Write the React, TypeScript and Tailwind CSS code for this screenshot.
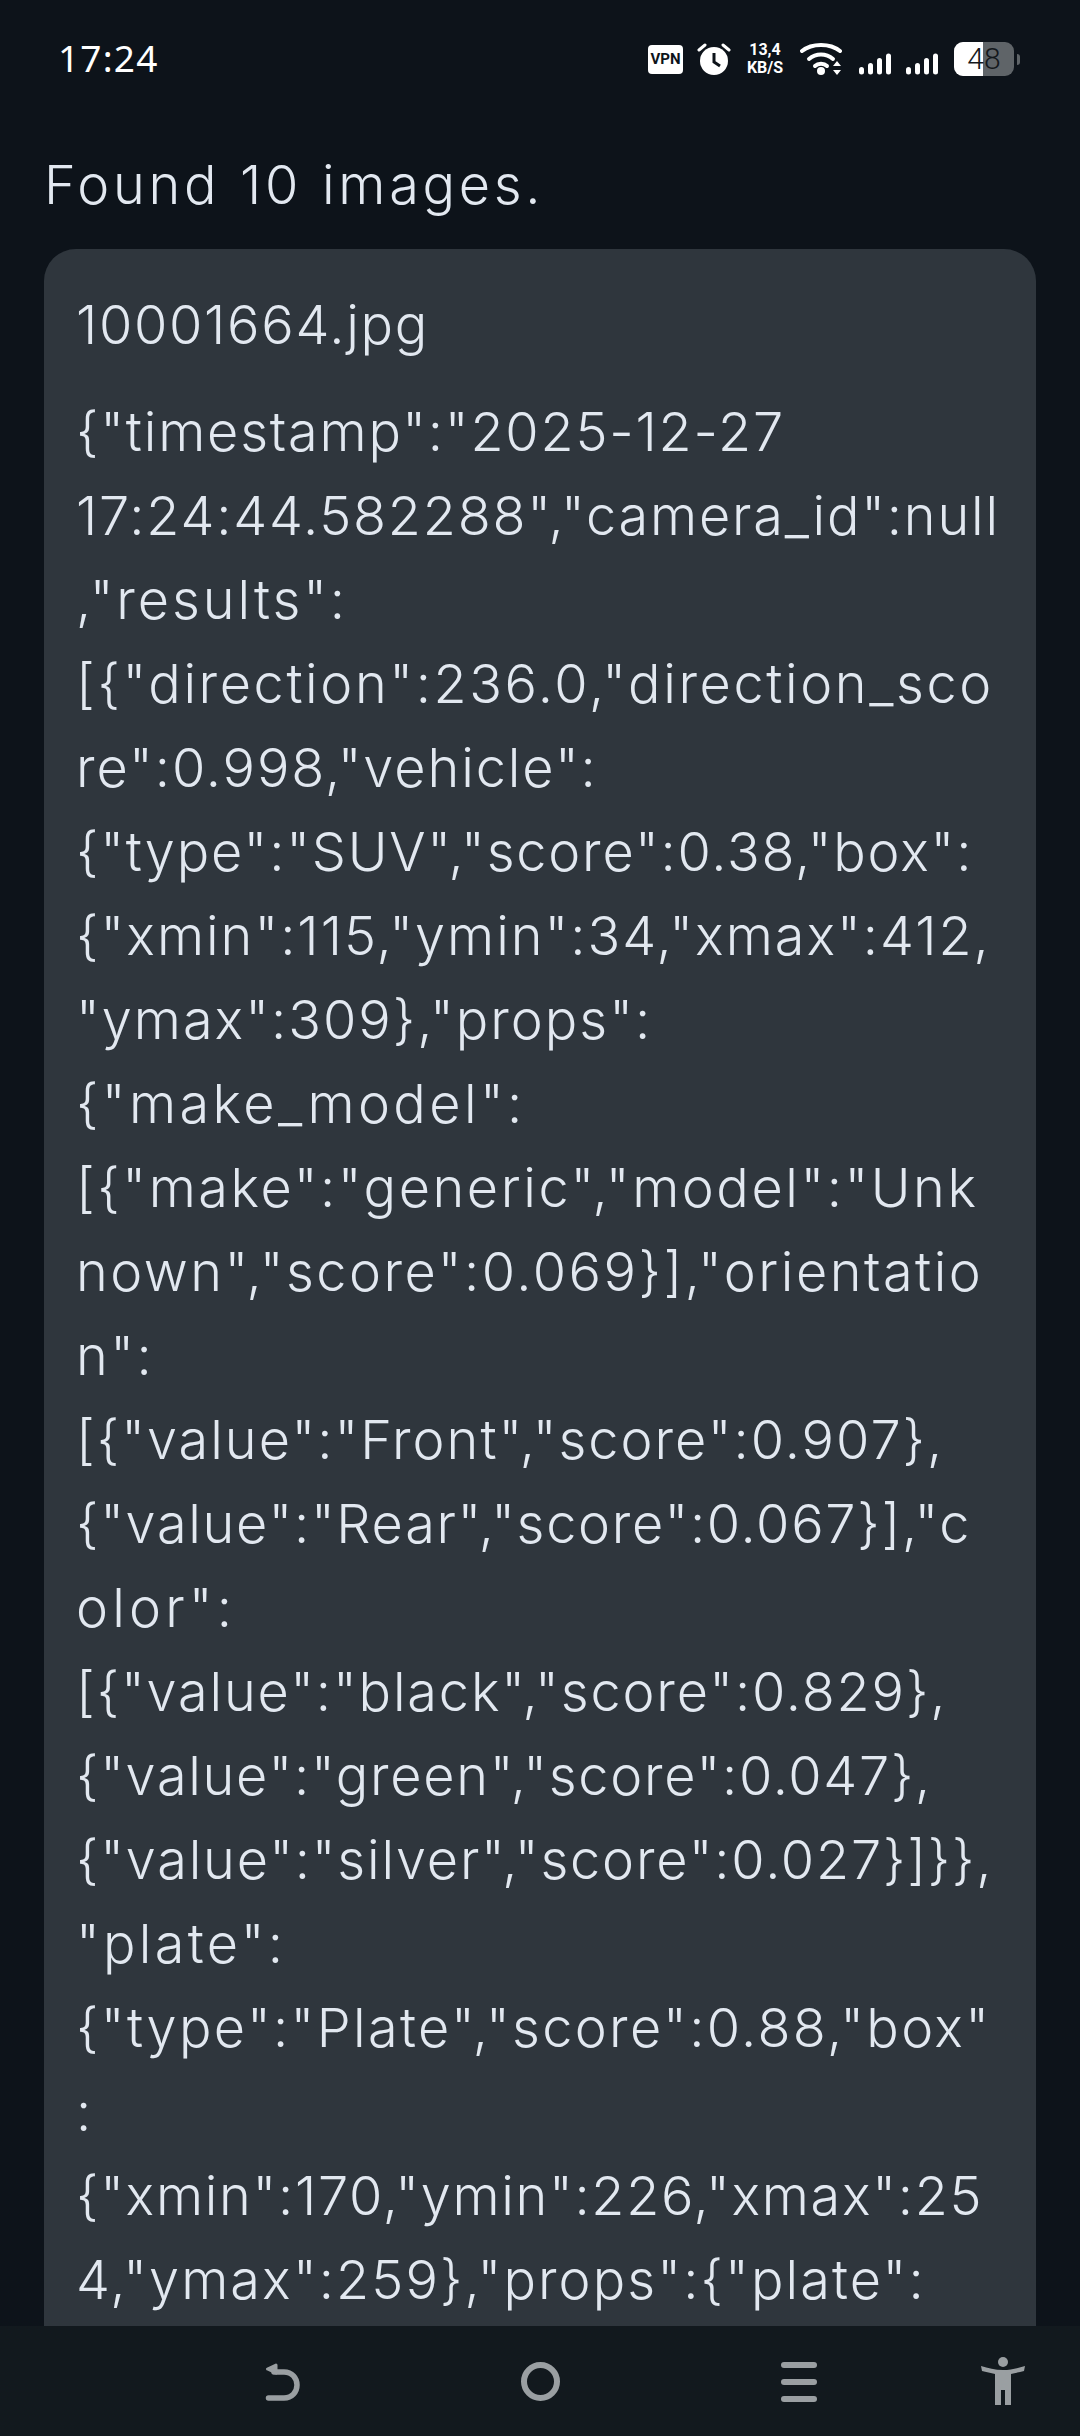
const lines = [
  ['{"timestamp":"2025-12-27', 'tracking-[1.8px]'],
  ['17:24:44.582288","camera_id":null', 'tracking-[1.8px]'],
  [',"results":', 'tracking-[2.9px]'],
  ['[{"direction":236.0,"direction_sco', 'tracking-[2.6px]'],
  ['re":0.998,"vehicle":', 'tracking-[1.9px]'],
  ['{"type":"SUV","score":0.38,"box":', 'tracking-[1.8px]'],
  ['{"xmin":115,"ymin":34,"xmax":412,', 'tracking-[2px]'],
  ['"ymax":309},"props":', 'tracking-[2px]'],
  ['{"make_model":', 'tracking-[3.4px]'],
  ['[{"make":"generic","model":"Unk', 'tracking-[2.55px]'],
  ['nown","score":0.069}],"orientatio', 'tracking-[2.5px]'],
  ['n":', 'tracking-[2.5px]'],
  ['[{"value":"Front","score":0.907},', 'tracking-[2px]'],
  ['{"value":"Rear","score":0.067}],"c', 'tracking-[1.7px]'],
  ['olor":', 'tracking-[4.2px]'],
  ['[{"value":"black","score":0.829},', 'tracking-[1.85px]'],
  ['{"value":"green","score":0.047},', 'tracking-[1.7px]'],
  ['{"value":"silver","score":0.027}]}},', 'tracking-[1.8px]'],
  ['"plate":', 'tracking-[3.3px]'],
  ['{"type":"Plate","score":0.88,"box"', 'tracking-[2.35px]'],
  [':', 'tracking-[1.9px]'],
  ['{"xmin":170,"ymin":226,"xmax":25', 'tracking-[1.7px]'],
  ['4,"ymax":259},"props":{"plate":', 'tracking-[2.1px]'],
]

const SignalBars = ({ className }: { className: string }) => (
  <svg className={className} width="32" height="22" viewBox="0 0 32 22" fill="#fff">
    <rect x="0" y="14" width="5" height="7.5" rx="2.5" />
    <rect x="9" y="10" width="5" height="11.5" rx="2.5" />
    <rect x="18" y="5" width="5" height="16.5" rx="2.5" />
    <rect x="27" y="0.5" width="5" height="21" rx="2.5" />
  </svg>
)

const StatusIcons = () => (
  <div className="flex items-center">
    <div className="w-[35px] h-[29px] rounded-[4px] bg-white text-[#0d131a] text-[15px] font-bold flex items-center justify-center leading-none font-['Roboto',sans-serif]">VPN</div>
    <svg className="ml-[14px]" width="34" height="34" viewBox="0 0 34 34" fill="none">
      <circle cx="17" cy="19" r="14" fill="#fff" />
      <path d="M17 11v9l6 4" stroke="#0d131a" strokeWidth="3" fill="none" />
      <path d="M2 8l6-5M32 8l-6-5" stroke="#fff" strokeWidth="3" strokeLinecap="round" />
    </svg>
    <div className="ml-[14px] w-[40px] flex flex-col items-center text-white text-[16px] font-bold leading-[18px] font-['Roboto',sans-serif]">
      <span>13,4</span>
      <span>KB/S</span>
    </div>
    <svg className="ml-[15px]" width="43" height="34" viewBox="0 0 43 34" fill="none">
      <path d="M2 9C12 1 30 1 40 9" stroke="#fff" strokeWidth="4" strokeLinecap="round" />
      <path d="M9 17C16 11 26 11 33 17" stroke="#fff" strokeWidth="4" strokeLinecap="round" />
      <path d="M15 24C18 21 24 21 27 24" stroke="#fff" strokeWidth="4" strokeLinecap="round" />
      <circle cx="21" cy="29" r="4" fill="#fff" />
      <path d="M37 19l4 5h-8zM37 33l-4-5h8z" fill="#fff" />
    </svg>
    <SignalBars className="ml-[16px] mt-[10px]" />
    <SignalBars className="ml-[15px] mt-[10px]" />
    <div className="ml-[16px] flex items-center">
      <div className="w-[60px] h-[34px] rounded-[9px] overflow-hidden flex bg-[#5f6468] relative">
        <div className="w-[29px] bg-white" />
        <span className="absolute inset-0 flex items-center justify-center text-[#14181c] text-[30px] leading-none font-['Roboto',sans-serif]">48</span>
      </div>
      <div className="ml-[3px] w-[3px] h-[11px] rounded-r-sm bg-[#5f6468]" />
    </div>
  </div>
)

const NavBar = () => (
  <div className="h-[110px] shrink-0 bg-[#12191e] relative">
    <svg className="absolute left-[264px] top-[35px]" width="38" height="42" viewBox="0 0 38 42" fill="none">
      <path d="M10 11H20C28 11 33 17 33 24C33 31 28 37 20 37H4.5" stroke="#9a9fa2" strokeWidth="5.5" strokeLinecap="round" />
      <path d="M12 4L3.5 8L12 12Z" fill="#9a9fa2" stroke="#9a9fa2" strokeWidth="3" strokeLinejoin="round" />
    </svg>
    <div className="absolute left-[521px] top-[36px] w-[39px] h-[39px] rounded-full border-[6px] border-[#9a9fa2]" />
    <div className="absolute left-[781px] top-[36px] w-[36px] flex flex-col gap-[11px]">
      <div className="h-[6px] rounded-full bg-[#9a9fa2]" />
      <div className="h-[6px] rounded-full bg-[#9a9fa2]" />
      <div className="h-[6px] rounded-full bg-[#9a9fa2]" />
    </div>
    <svg className="absolute left-[980px] top-[31px]" width="46" height="48" viewBox="0 0 46 48" fill="#9a9fa2">
      <circle cx="23" cy="5" r="5" />
      <path d="M1 9C8 11 15 13 23 13C31 13 38 11 45 9L44 14C40 15 35 16 31 17V48H25V33H21V48H15V17C11 16 6 15 2 14Z" />
    </svg>
  </div>
)

export default function App() {
  return (
    <div className="h-[2436px] w-[1080px] flex flex-col overflow-hidden bg-[#0d131a] font-['Inter',sans-serif] font-[350] text-[#e2e8f0]">
      <div className="flex-1 min-h-0 overflow-hidden">
        <div className="h-[118px] pl-[58px] pr-[60px] flex items-center justify-between text-white">
          <span className="-mt-[3px] text-[37px] leading-none font-normal tracking-[1.2px] font-['Noto_Sans',sans-serif]">17:24</span>
          <StatusIcons />
        </div>
        <p className="ml-[44px] h-[131px] pt-[25px] text-[54px] leading-[84px] tracking-[3.7px] [word-spacing:1px]">Found 10 images.</p>
        <div className="mx-[44px] rounded-[32px] bg-[#2f363d] pl-[32px] pr-[34px] pt-[34px] pb-[100px]">
          <p className="text-[54px] leading-[84px] tracking-[1.7px]">10001664.jpg</p>
          <div className="mt-[23px] text-[54px] leading-[84px] whitespace-nowrap">
            {lines.map(([text, tracking], i) => (
              <div key={i} className={tracking}>{text}</div>
            ))}
          </div>
        </div>
      </div>
      <NavBar />
    </div>
  )
}
